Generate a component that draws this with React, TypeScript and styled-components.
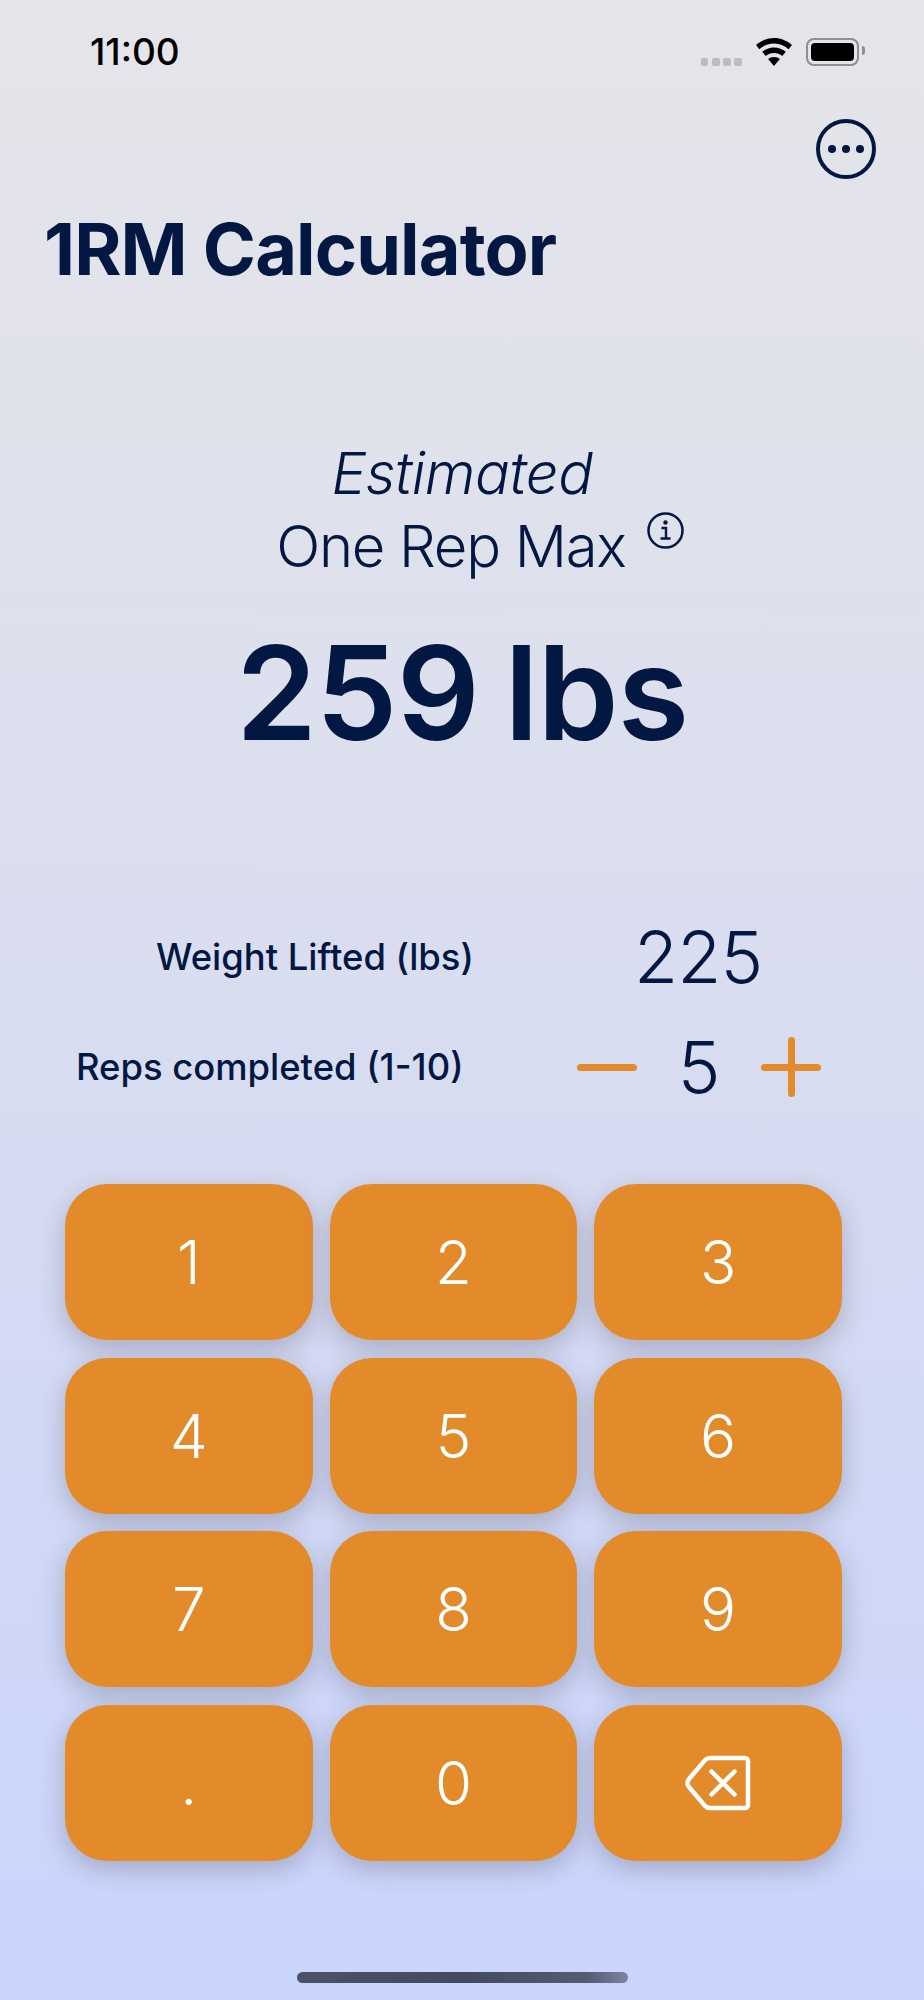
import React from 'react';
import styled, { createGlobalStyle } from 'styled-components';

const navy = '#021843';
const orange = '#e38b2a';

const GlobalStyle = createGlobalStyle`
  html, body {
    margin: 0;
    padding: 0;
  }
  body {
    font-family: Inter, 'Noto Sans', sans-serif;
    background: #c9d5fd;
  }
`;

const Page = styled.div`
  position: relative;
  width: 924px;
  height: 2000px;
  overflow: hidden;
  display: flex;
  flex-direction: column;
  background: linear-gradient(180deg, #e5e5ea 0%, #dfe1ec 25%, #d8dcf1 55%, #c9d5fd 100%);
  color: ${navy};
`;

const StatusBar = styled.div`
  height: 38px;
  padding: 34px 65px 0 90px;
  display: flex;
  justify-content: space-between;
  align-items: flex-start;
`;

const Time = styled.div`
  font-size: 37px;
  line-height: 36px;
  font-weight: 500;
  color: #000;
`;

const StatusIcons = styled.div`
  display: flex;
  align-items: center;
  margin-top: 4px;
`;

const Dots = styled.div`
  display: flex;
  gap: 3.6px;
  margin: 20px 14px 0 0;
`;

const Dot = styled.span`
  width: 7.6px;
  height: 8px;
  border-radius: 2px;
  background: #bdbdc1;
`;

const Battery = styled.div`
  position: relative;
  width: 53px;
  height: 28px;
  box-sizing: border-box;
  margin-left: 14px;
  padding: 3px;
  border: 2px solid #8f8f93;
  border-radius: 8px;
  &::before {
    content: '';
    display: block;
    height: 100%;
    border-radius: 4px;
    background: #000;
  }
  &::after {
    content: '';
    position: absolute;
    right: -8px;
    top: 6px;
    width: 3px;
    height: 9px;
    border-radius: 0 3px 3px 0;
    background: #8f8f93;
  }
`;

const TopAction = styled.div`
  display: flex;
  justify-content: flex-end;
  padding: 47px 48px 0 0;
`;

const Title = styled.h1`
  margin: 27px 0 0 44px;
  font-size: 72px;
  line-height: 86px;
  font-weight: 700;
  letter-spacing: -0.9px;
`;

const Hero = styled.div`
  margin-top: 145px;
  display: flex;
  flex-direction: column;
  align-items: center;
`;

const Estimated = styled.div`
  font-size: 58px;
  line-height: 73px;
  font-style: italic;
  font-weight: 350;
  letter-spacing: -0.5px;
`;

const OneRep = styled.div`
  position: relative;
  margin-right: 22px;
  font-size: 58px;
  line-height: 73px;
  font-weight: 350;
  letter-spacing: -1.300px;
`;

const InfoIcon = styled.svg`
  position: absolute;
  left: 371px;
  top: 2px;
`;

const Result = styled.div`
  margin-top: 35px;
  font-size: 130px;
  line-height: 150px;
  font-weight: 600;
  letter-spacing: -1px;
  word-spacing: -6px;
`;

const InputRow = styled.div<{ $top: number }>`
  display: grid;
  grid-template-columns: 520px 1fr;
  align-items: center;
  height: 84px;
  margin-top: ${(p) => p.$top}px;
`;

const Label = styled.div<{ $indent: number }>`
  padding-left: ${(p) => p.$indent}px;
  font-size: 36.4px;
  font-weight: 500;
  white-space: nowrap;
`;

const ValueCell = styled.div`
  display: flex;
  align-items: center;
  font-size: 72px;
  font-weight: 350;
`;

const Weight = styled.span`
  margin-left: 114px;
  letter-spacing: -1px;
`;

const Reps = styled.span`
  width: 124px;
  text-align: center;
`;

const Stepper = styled.span<{ $plus?: boolean }>`
  position: relative;
  width: 60px;
  height: 60px;
  margin-left: ${(p) => (p.$plus ? 0 : 57)}px;
  &::before {
    content: '';
    position: absolute;
    left: 0;
    right: 0;
    top: 27px;
    height: 7px;
    border-radius: 4px;
    background: ${orange};
  }
  ${(p) =>
    p.$plus &&
    `&::after {
      content: '';
      position: absolute;
      top: 0;
      bottom: 0;
      left: 27px;
      width: 7px;
      border-radius: 4px;
      background: ${orange};
    }`}
`;

const Keypad = styled.div`
  margin: 77px 82px 0 65px;
  display: grid;
  grid-template-columns: repeat(3, 1fr);
  grid-auto-rows: 156px;
  gap: 17.6px 17px;
`;

const Key = styled.button`
  border: 0;
  padding: 0;
  display: flex;
  align-items: center;
  justify-content: center;
  border-radius: 42px;
  background: ${orange};
  color: #fff;
  font-family: inherit;
  font-size: 60px;
  font-weight: 350;
  box-shadow: 0 8px 26px rgba(60, 50, 60, 0.28);
`;

const HomeBar = styled.div`
  position: absolute;
  left: 297px;
  top: 1972px;
  width: 331px;
  height: 11px;
  border-radius: 6px;
  background: linear-gradient(90deg, #4c5165 0%, #454a5d 50%, #555b72 88%, #7c84a2 100%);
`;

const keys = ['1', '2', '3', '4', '5', '6', '7', '8', '9', '.', '0'];

function App() {
  return (
    <Page>
      <GlobalStyle />
      <StatusBar>
        <Time>11:00</Time>
        <StatusIcons>
          <Dots>
            {[0, 1, 2, 3].map((i) => (
              <Dot key={i} />
            ))}
          </Dots>
          <svg width="36" height="28" viewBox="0 0 36 28" fill="#000">
            <path d="M18 0C11 0 5 2.700 0 7l3.400 4.200C7.500 7.700 12.500 5.600 18 5.600S28.500 7.700 32.600 11.200L36 7C31 2.700 25 0 18 0Z" />
            <path d="M18 9.500c-4.500 0-8.500 1.600-11.800 4.300l3.500 4.200c2.300-1.800 5.100-2.900 8.300-2.900s6 1.100 8.300 2.900l3.500-4.200C26.500 11.100 22.500 9.500 18 9.500Z" />
            <path d="M18 19c-2.300 0-4.300.8-5.900 2.100L18 28l5.900-6.900C22.300 19.800 20.300 19 18 19Z" />
          </svg>
          <Battery />
        </StatusIcons>
      </StatusBar>

      <TopAction>
        <svg width="60" height="60" viewBox="0 0 60 60" fill="none">
          <circle cx="30" cy="30" r="28" stroke={navy} strokeWidth="4" />
          <circle cx="16" cy="30" r="4" fill={navy} />
          <circle cx="30" cy="30" r="4" fill={navy} />
          <circle cx="44" cy="30" r="4" fill={navy} />
        </svg>
      </TopAction>

      <Title>1RM Calculator</Title>

      <Hero>
        <Estimated>Estimated</Estimated>
        <OneRep>
          One Rep Max
          <InfoIcon width="37" height="37" viewBox="0 0 37 37" fill="none">
            <circle cx="18.500" cy="18.500" r="17" stroke={navy} strokeWidth="2.500" />
            <circle cx="18.500" cy="10.500" r="2.200" fill={navy} />
            <path d="M14.500 16h4.500v10M13.500 26.500h10" stroke={navy} strokeWidth="2.400" />
          </InfoIcon>
        </OneRep>
        <Result>259 lbs</Result>
      </Hero>

      <InputRow $top={145}>
        <Label $indent={156}>Weight Lifted (lbs)</Label>
        <ValueCell>
          <Weight>225</Weight>
        </ValueCell>
      </InputRow>
      <InputRow $top={26}>
        <Label $indent={76}>Reps completed (1-10)</Label>
        <ValueCell>
          <Stepper />
          <Reps>5</Reps>
          <Stepper $plus />
        </ValueCell>
      </InputRow>

      <Keypad>
        {keys.map((k) => (
          <Key key={k}>{k}</Key>
        ))}
        <Key aria-label="Delete">
          <svg width="66" height="56" viewBox="0 0 66 56" fill="none" stroke="#fff" strokeLinecap="round" strokeLinejoin="round">
            <path
              d="M25 3H60a3 3 0 0 1 3 3V50a3 3 0 0 1-3 3H25a7 7 0 0 1-5-2.100L4 32a6 6 0 0 1 0-8L20 5.100A7 7 0 0 1 25 3Z"
              strokeWidth="4.500"
            />
            <path d="M26.500 16.500L49.500 39.500M49.500 16.500L26.500 39.500" strokeWidth="4.500" />
          </svg>
        </Key>
      </Keypad>

      <HomeBar />
    </Page>
  );
}

export default App;
